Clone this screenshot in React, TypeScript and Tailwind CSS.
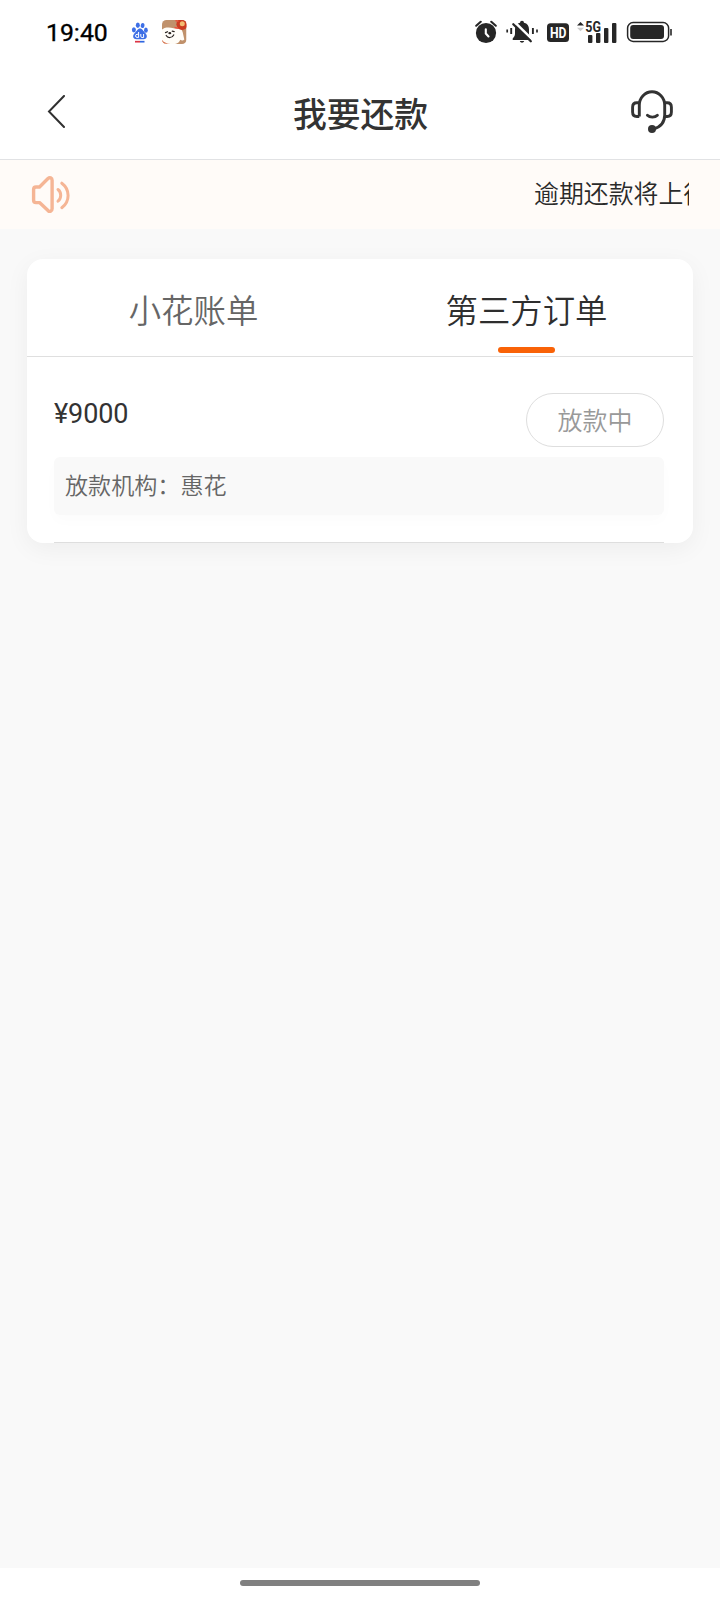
import type { ReactNode } from "react";

const ink = "#262626";

function BaiduIcon() {
  return (
    <svg className="ml-[23px] h-[22px] w-[18px] shrink-0" viewBox="131 22 18 22">
      <g fill="#3d6fe6">
        <ellipse cx="133.9" cy="30.8" rx="2" ry="2.600" />
        <ellipse cx="137.8" cy="26.3" rx="2" ry="2.700" />
        <ellipse cx="142.6" cy="26.5" rx="1.900" ry="2.600" transform="rotate(12 142.6 26.5)" />
        <ellipse cx="145.9" cy="31.2" rx="1.900" ry="2.600" />
        <path d="M140 29.600c2.500 0 3.200 2.600 5 4.200 2.700 2.300 2.600 6.400-1.400 6.400h-7.200c-4 0-4.100-4.100-1.400-6.400 1.900-1.600 2.500-4.200 5-4.200z" />
      </g>
      <path d="M138.600 33v5.500M138.600 35.300h-1.500a1.500 1.500 0 0 0 0 3.100h1.500M140.800 35v2.200c0 .9.500 1.300 1.300 1.300h1.500V35" fill="none" stroke="#fff" strokeWidth="1" />
      <path d="M135 42.700h5" stroke="#dc3545" strokeWidth="1.700" />
      <path d="M140 42.700h4.500" stroke="#2f66e0" strokeWidth="1.700" />
    </svg>
  );
}

function DogIcon() {
  return (
    <svg className="ml-[12px] h-[26px] w-[26px] shrink-0" viewBox="161 19 26 26">
      <defs>
        <clipPath id="dog-tile">
          <rect x="162" y="20" width="24.500" height="24" rx="4.500" />
        </clipPath>
      </defs>
      <g clipPath="url(#dog-tile)">
        <rect x="162" y="20" width="24.500" height="24" fill="#c0916b" />
        <path d="M161 30l3.500-2c3-.8 6-.6 9 .2l4.500.2c2.200-.6 3.800 1 4.700 3.800l1.600 7.300c-1 1.500-2.800 1.300-4 .3l-1.300 2.300c-1.500 1.500-3.500 2-5.500 2h-8c-3 0-4.500-2.500-4.500-5z" fill="#fffdf8" />
        <path d="M162 40c2 2.800 5 3.500 8.500 3.800H162z" fill="#d56a45" />
        <circle cx="182" cy="24.300" r="5.600" fill="#cc3b20" />
        <circle cx="182.300" cy="23.800" r="2.500" fill="#f3bd71" />
        <path d="M175.500 20.500l3 1M174.500 27.500l3.500.7" stroke="#e9503b" strokeWidth="1.400" />
      </g>
      <path d="M165.500 32.600l2-.9M172.200 31.200l2 .4M166.200 35.500c1.500 2.800 5.800 2.800 7.500-.6" fill="none" stroke="#292320" strokeWidth="1.200" strokeLinecap="round" />
      <ellipse cx="169.800" cy="33.200" rx="1.500" ry="1.100" fill="#292320" />
    </svg>
  );
}

function AlarmIcon() {
  return (
    <svg className="h-[24px] w-[22px] shrink-0" viewBox="475 20 22 24">
      <circle cx="486" cy="33" r="10.100" fill={ink} />
      <path d="M476.200 25.700l4.500-3.900M491.300 21.800l4.500 3.900" stroke={ink} strokeWidth="2.100" strokeLinecap="round" />
      <path d="M485.800 29.300v4.200l2.700 3" fill="none" stroke="#fff" strokeWidth="2.100" strokeLinecap="round" />
    </svg>
  );
}

function MutedBellIcon() {
  return (
    <svg className="ml-[9px] h-[24px] w-[32px] shrink-0" viewBox="506 20 32 24">
      <path d="M520 22.700a2 2 0 0 1 4 0c3.300.7 5 3.300 5 6.500v4.500c0 2 .8 3 2.300 4.800v1.500h-18.600v-1.500c1.500-1.800 2.300-2.800 2.300-4.800v-4.500c0-3.200 1.700-5.800 5-6.500z" fill={ink} />
      <path d="M519.800 41h4.400c-.4 1.300-1.200 1.700-2.200 1.700s-1.800-.4-2.200-1.700z" fill={ink} />
      <path d="M514.700 22.300l19 18.600" stroke="#fff" strokeWidth="2.600" />
      <path d="M513.300 24.200l17.500 17.100" stroke={ink} strokeWidth="2.300" strokeLinecap="round" />
      <path d="M511.200 28v6M532.900 28v6" stroke={ink} strokeWidth="1.900" />
      <path d="M507.200 29.400v3.200M537 29.400v3.200" stroke={ink} strokeWidth="1.700" />
    </svg>
  );
}

function HdIcon() {
  return (
    <svg className="ml-[9px] h-[19px] w-[22px] shrink-0" viewBox="547 23 22 19">
      <rect x="547" y="23.300" width="22" height="18.700" rx="3.500" fill={ink} />
      <text x="550" y="37.800" fill="#fff" fontSize="14.500" fontWeight="700" fontFamily="Roboto, sans-serif" textLength="16.500" lengthAdjust="spacingAndGlyphs">HD</text>
    </svg>
  );
}

function SignalIcon() {
  return (
    <svg className="ml-[8px] h-[24px] w-[40px] shrink-0" viewBox="577 19 40 24">
      <path d="M577 24.600l3.500-3.500 3.500 3.500z" fill={ink} />
      <path d="M577 26.800h7l-3.500 3.500z" fill="#ccc" />
      <g fill={ink}>
        <rect x="588" y="34" width="4.400" height="8" rx="1" />
        <rect x="596" y="32" width="4.400" height="10" rx="1" />
        <rect x="604" y="27" width="4.400" height="15" rx="1" />
        <rect x="612" y="22" width="4.400" height="20" rx="1" />
      </g>
      <text x="585.300" y="30.700" fill={ink} fontSize="14.300" fontWeight="700" fontFamily="Roboto, sans-serif" textLength="15.700" lengthAdjust="spacingAndGlyphs">5G</text>
    </svg>
  );
}

function BatteryIcon() {
  return (
    <svg className="ml-[9px] h-[22px] w-[46px] shrink-0" viewBox="626 21 46 22">
      <rect x="627.600" y="22.600" width="41" height="18.800" rx="5.500" fill="none" stroke={ink} strokeWidth="1.500" />
      <rect x="630.200" y="25" width="33.800" height="14" rx="3" fill={ink} />
      <path d="M671 29v6.500" stroke={ink} strokeWidth="1.600" />
    </svg>
  );
}

function StatusBar() {
  return (
    <div className="flex h-[64px] items-center pl-[46px]">
      <div className="w-[62px] pt-[1px] font-[Roboto,sans-serif] text-[24.800px] leading-[30px] font-normal whitespace-nowrap text-black [-webkit-text-stroke:0.35px_black]">19:40</div>
      <BaiduIcon />
      <DogIcon />
      <div className="ml-[288px] flex items-center">
        <AlarmIcon />
        <MutedBellIcon />
        <HdIcon />
        <SignalIcon />
        <BatteryIcon />
      </div>
    </div>
  );
}

function Header() {
  return (
    <header className="flex h-[96px] items-center justify-between border-b border-[#e1e2e4] pr-[46px] pl-[47px]">
      <svg className="h-[34px] w-[45px]" viewBox="47 94.500 45 34" fill="none" stroke="#303030" strokeWidth="2">
        <path d="M64 95.500L49 111l15 15.500" strokeLinecap="round" />
      </svg>
      <h1 className="pt-[3px] pr-[1px] text-[33.800px] leading-[44px] font-medium text-[#333]">我要还款</h1>
      <svg className="h-[44px] w-[44px]" viewBox="630 90 44 44" fill="none" stroke="#333" strokeWidth="2.900">
        <path d="M639.300 116.500v-11.200a12.700 13.500 0 0 1 25.400 0v9.700c0 7-4.500 12-11 14" />
        <path d="M639.300 102.700h-2.500c-2.700 0-4.200 1.600-4.200 4.500v4.800c0 3 1.500 4.500 4.200 4.500h2.500M664.700 102.700h2.500c2.700 0 4.200 1.600 4.200 4.500v4.800c0 3-1.500 4.500-4.200 4.500h-2.500" />
        <path d="M647.400 115.200c2.500 2.500 7.500 2.500 10 0" strokeLinecap="round" />
        <circle cx="652" cy="129" r="4" fill="#333" stroke="none" />
      </svg>
    </header>
  );
}

function Notice() {
  return (
    <div className="flex h-[69px] items-center justify-between bg-[#fffbf8] pr-[31px] pl-[31px]">
      <svg className="h-[40px] w-[40px]" viewBox="31 175 40 40" fill="none" stroke="#f5b595" strokeWidth="3.400" strokeLinecap="round" strokeLinejoin="round">
        <path d="M48 178.500L39.500 187H36c-1.700 0-2.400.9-2.400 2.600V200c0 1.700.7 2.600 2.400 2.600h3.500l8.500 8c1.800 1.500 4.100.6 4.100-1.800v-28.500c0-2.400-2.300-3.300-4.100-1.800z" />
        <path d="M58 189.500c3.600 2.700 3.600 8.800 0 11.700M61.800 183.200c8.400 6.300 8.400 18.100 0 24.500" strokeWidth="3" />
      </svg>
      <p className="w-[155px] overflow-hidden pb-[5px] text-[24.900px] leading-[36px] font-[350] whitespace-nowrap text-[#2a2a2a]">逾期还款将上征信</p>
    </div>
  );
}

function Tab({ children, active }: { children: ReactNode; active?: boolean }) {
  return (
    <button className={active ? "flex w-1/2 flex-col items-center pt-[27px] text-[#2e2e2e]" : "flex w-1/2 flex-col items-center pt-[27px] text-[#666]"}>
      <span className="text-[32.400px] leading-[46px] font-[350]">{children}</span>
      {active && <span className="mt-[15px] h-[6px] w-[57px] rounded-full bg-[#f96207]" />}
    </button>
  );
}

export default function App() {
  return (
    <div className="flex h-[1600px] w-[720px] flex-col overflow-hidden bg-white font-['Noto_Sans_CJK_SC',sans-serif]">
      <StatusBar />
      <Header />
      <Notice />
      <main className="flex-1 bg-[#f9f9f9] px-[27px] pt-[30px]">
        <section className="h-[284px] rounded-[16px] bg-white shadow-[0_6px_24px_rgba(0,0,0,0.05)]">
          <div className="flex h-[98px] items-start border-b border-[#dfdfdf]">
            <Tab>小花账单</Tab>
            <Tab active>第三方订单</Tab>
          </div>
          <div className="mr-[29px] ml-[27px] h-[186px] border-b border-[#dedede] pt-[36px]">
            <div className="flex items-start justify-between">
              <span className="pt-[5px] font-[Roboto,sans-serif] text-[27px] leading-[32px] tracking-[-0.1px] text-[#333]">¥9000</span>
              <span className="flex h-[54px] w-[138px] items-center justify-center rounded-full border border-[#dedede] pb-[3px] text-[25px] leading-[36px] font-[350] text-[#999]">放款中</span>
            </div>
            <div className="mt-[10px] h-[58px] rounded-[6px] bg-[#f9f9f9] pt-[10px] pl-[11px] text-[23.100px] leading-[34px] font-[350] text-[#666] shadow-[0_6px_14px_rgba(0,0,0,0.015)]">
              放款机构：惠花
            </div>
          </div>
        </section>
      </main>
      <footer className="flex h-[32px] justify-center pt-[12px]">
        <div className="h-[6px] w-[240px] rounded-full bg-[#808080]" />
      </footer>
    </div>
  );
}
